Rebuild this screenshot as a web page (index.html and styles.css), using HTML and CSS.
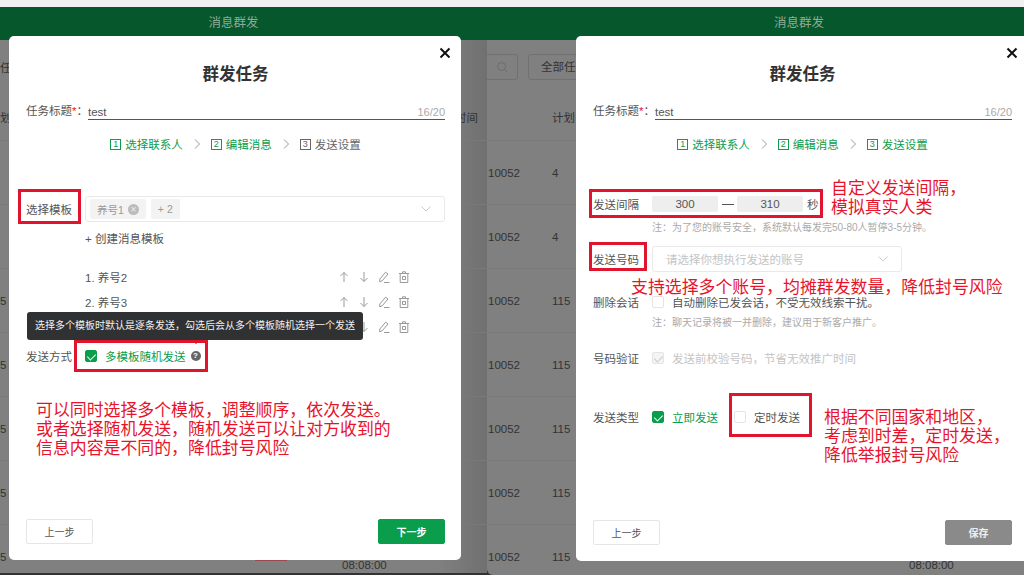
FILE: index.html
```html
<!DOCTYPE html>
<html lang="zh-CN">
<head>
    <meta charset="UTF-8">
    <meta name="viewport" content="width=device-width, initial-scale=1.0">
    <title>消息群发</title>
    <link rel="stylesheet" href="styles.css">
</head>
<body>
    <svg class="defs" aria-hidden="true">
        <symbol id="i-up" viewBox="0 0 12 12"><path d="M6 11V1.5M2.5 5 6 1.5 9.5 5"/></symbol>
        <symbol id="i-down" viewBox="0 0 12 12"><path d="M6 1v9.5M2.5 7 6 10.5 9.5 7"/></symbol>
        <symbol id="i-pen" viewBox="0 0 12 12"><path d="M1.8 8 7.6 1.2 10 3 4.2 9.8l-2.6.9zM6 11.5h5.5"/></symbol>
        <symbol id="i-bin" viewBox="0 0 12 12"><path d="M2.2 2.5h7.6v9H2.2zM1 2.5h10M4.5 2.5V.8h3v1.7M4.5 5.5h3v3h-3z"/></symbol>
        <symbol id="i-next" viewBox="0 0 8 12"><path d="M2 1.5 6.5 6 2 10.5"/></symbol>
        <symbol id="i-drop" viewBox="0 0 12 8"><path d="M1.5 1.5 6 6l4.5-4.5"/></symbol>
        <symbol id="i-close" viewBox="0 0 12 12"><path d="M1.5 1.5l9 9M10.5 1.5l-9 9"/></symbol>
    </svg>

    <!-- 左：选择模板 -->
    <section class="panel panel-left">
        <div class="topbar"></div>
        <header class="app-title">消息群发</header>
        <div class="toolbar"><span class="tool-text">任</span></div>
        <div class="thead"><span>划</span><span class="thead-end">时间</span></div>
        <div class="row"></div>
        <div class="row"></div>
        <div class="row"><span class="c-id">5</span></div>
        <div class="row"><span class="c-id">5</span></div>
        <div class="row"><span class="c-id">5</span></div>
        <div class="row"><span class="c-id">5</span></div>
        <div class="row"><span class="c-id">5</span><span class="c-status"></span><span class="c-time">08:08:00</span></div>

        <div class="modal">
            <button class="close" type="button"><svg><use href="#i-close"/></svg></button>
            <h2>群发任务</h2>
            <div class="title-row">
                <label>任务标题<em>*</em>：</label>
                <div class="title-input"><span>test</span><span class="count">16/20</span></div>
            </div>
            <div class="steps">
                <span class="step on"><i>1</i>选择联系人</span>
                <svg class="sep"><use href="#i-next"/></svg>
                <span class="step on"><i>2</i>编辑消息</span>
                <svg class="sep"><use href="#i-next"/></svg>
                <span class="step"><i>3</i>发送设置</span>
            </div>

            <div class="field field-first">
                <label>选择模板</label>
                <div class="select">
                    <span class="tag">养号1<b class="tag-x">×</b></span>
                    <span class="tag">+ 2</span>
                    <svg class="drop"><use href="#i-drop"/></svg>
                </div>
            </div>
            <a class="create" href="#">+ 创建消息模板</a>
            <ul class="tpl-list">
                <li><span>1. 养号2</span>
                    <div class="tpl-actions"><svg><use href="#i-up"/></svg><svg><use href="#i-down"/></svg><svg><use href="#i-pen"/></svg><svg><use href="#i-bin"/></svg></div>
                </li>
                <li><span>2. 养号3</span>
                    <div class="tpl-actions"><svg><use href="#i-up"/></svg><svg><use href="#i-down"/></svg><svg><use href="#i-pen"/></svg><svg><use href="#i-bin"/></svg></div>
                </li>
                <li><span></span>
                    <div class="tpl-actions"><svg><use href="#i-up"/></svg><svg><use href="#i-down"/></svg><svg><use href="#i-pen"/></svg><svg><use href="#i-bin"/></svg></div>
                </li>
            </ul>
            <div class="field field-method">
                <label>发送方式</label>
                <div class="check-line">
                    <span class="check on"></span><span class="green">多模板随机发送</span><span class="help">?</span>
                </div>
            </div>

            <div class="foot">
                <button class="btn" type="button">上一步</button>
                <button class="btn primary" type="button">下一步</button>
            </div>

            <div class="tip">选择多个模板时默认是逐条发送，勾选后会从多个模板随机选择一个发送</div>
            <div class="mark m-tpl"></div>
            <div class="mark m-method"></div>
            <p class="note n-left">可以同时选择多个模板，调整顺序，依次发送。<br>或者选择随机发送，随机发送可以让对方收到的<br>信息内容是不同的，降低封号风险</p>
        </div>
    </section>

    <!-- 右：发送设置 -->
    <section class="panel panel-right">
        <div class="topbar"></div>
        <header class="app-title">消息群发</header>
        <div class="toolbar">
            <span class="search"><svg viewBox="0 0 12 12"><circle cx="5.5" cy="5.5" r="4"/><path d="M8.5 8.5 11 11"/></svg></span>
            <span class="filter">全部任务</span>
        </div>
        <div class="thead"><span class="thead-plan">计划</span></div>
        <div class="row"><span class="c-id">10052</span><span class="c-num">4</span></div>
        <div class="row"><span class="c-id">10052</span><span class="c-num">4</span></div>
        <div class="row"><span class="c-id">10052</span><span class="c-num">115</span></div>
        <div class="row"><span class="c-id">10052</span><span class="c-num">115</span></div>
        <div class="row"><span class="c-id">10052</span><span class="c-num">115</span></div>
        <div class="row"><span class="c-id">10052</span><span class="c-num">115</span></div>
        <div class="row"><span class="c-id">10052</span><span class="c-num">115</span><span class="c-status"></span><span class="c-time">08:08:00</span></div>

        <div class="modal">
            <button class="close" type="button"><svg><use href="#i-close"/></svg></button>
            <h2>群发任务</h2>
            <div class="title-row">
                <label>任务标题<em>*</em>：</label>
                <div class="title-input"><span>test</span><span class="count">16/20</span></div>
            </div>
            <div class="steps">
                <span class="step on"><i>1</i>选择联系人</span>
                <svg class="sep"><use href="#i-next"/></svg>
                <span class="step on"><i>2</i>编辑消息</span>
                <svg class="sep"><use href="#i-next"/></svg>
                <span class="step on"><i>3</i>发送设置</span>
            </div>

            <div class="field field-first field-gap">
                <label>发送间隔</label>
                <div class="range">
                    <span class="num">300</span><span class="dash"></span><span class="num">310</span><span>秒</span>
                </div>
            </div>
            <div class="field hint"><span></span><span>注：为了您的账号安全，系统默认每发完50-80人暂停3-5分钟。</span></div>
            <div class="field field-account">
                <label>发送号码</label>
                <div class="select select-account">
                    <span class="placeholder">请选择你想执行发送的账号</span>
                    <svg class="drop"><use href="#i-drop"/></svg>
                </div>
            </div>
            <div class="field field-delete">
                <label>删除会话</label>
                <div class="check-line"><span class="check"></span><span>自动删除已发会话，不受无效线索干扰。</span></div>
            </div>
            <div class="field hint hint-delete"><span></span><span>注：聊天记录将被一并删除，建议用于新客户推广。</span></div>
            <div class="field field-verify">
                <label>号码验证</label>
                <div class="check-line muted"><span class="check off"></span><span>发送前校验号码，节省无效推广时间</span></div>
            </div>
            <div class="field field-type">
                <label>发送类型</label>
                <div class="check-line">
                    <span class="check on"></span><span class="green">立即发送</span>
                    <span class="check check-later"></span><span>定时发送</span>
                </div>
            </div>

            <div class="foot">
                <button class="btn" type="button">上一步</button>
                <button class="btn disabled" type="button">保存</button>
            </div>

            <div class="mark m-gap"></div>
            <div class="mark m-account"></div>
            <div class="mark m-later"></div>
            <p class="note n-gap">自定义发送间隔，<br>模拟真实人类</p>
            <p class="note n-account">支持选择多个账号，均摊群发数量，降低封号风险</p>
            <p class="note n-later">根据不同国家和地区，<br>考虑到时差，定时发送，<br>降低举报封号风险</p>
        </div>
    </section>
</body>
</html>
```

FILE: styles.css
```css
* {
    box-sizing: border-box;
}
html, body {
    height: 100%;
}
body {
    margin: 0;
    display: flex;
    overflow: hidden;
    background: #333;
    font-family: "Liberation Sans", "Noto Sans CJK SC", sans-serif;
    font-size: 11.5px;
    color: #555;
}
.defs {
    display: none;
}
svg {
    fill: none;
    stroke: currentColor;
    stroke-width: 1;
}

/* 背景页面 */
.panel {
    position: relative;
    overflow: hidden;
    background: #808080;
    color: #333;
    flex: none;
}
.panel-left {
    width: 487px;
    height: 573px;
    background: linear-gradient(90deg, #808080 90%, #707070);
}
.panel-right {
    width: 537px;
    height: 575px;
    border-bottom-left-radius: 6px;
}
.topbar {
    height: 7px;
    background: #f0f1f1;
}
.app-title {
    width: 467px;
    height: 33px;
    line-height: 32px;
    text-align: center;
    font-size: 12.5px;
    color: #8eaa98;
    box-shadow: 20px 0 0 #06582c;
    background: #06582c;
}
.panel-right .app-title {
    width: 624px;
}
.toolbar {
    display: flex;
    align-items: center;
    gap: 10px;
    height: 39px;
    padding-top: 14px;
}
.panel-right .toolbar {
    margin-left: -10px;
}
.search {
    width: 41px;
    height: 26px;
    display: flex;
    align-items: center;
    justify-content: flex-end;
    padding-right: 9px;
    border: 1px solid #717171;
    border-radius: 3px;
    color: #6c6c6c;
}
.search svg {
    width: 12px;
    height: 12px;
}
.filter {
    width: 100px;
    height: 26px;
    line-height: 24px;
    padding-left: 12px;
    border: 1px solid #717171;
    border-radius: 3px;
}
.thead {
    display: flex;
    justify-content: space-between;
    align-items: center;
    height: 61px;
    padding-top: 15px;
    padding-right: 9px;
    font-size: 11.5px;
}
.thead-end {
    margin-left: auto;
}
.thead-plan {
    margin-left: 65px;
}
.row {
    display: flex;
    align-items: center;
    height: 64px;
    border-top: 1px solid #797979;
    font-size: 11.5px;
}
.c-id {
    width: 255px;
    flex: none;
}
.panel-right .c-id {
    width: 64px;
    margin-left: 1px;
}
.c-num {
    width: 268px;
    flex: none;
}
.c-status {
    width: 32px;
    height: 9px;
    margin-right: 55px;
    flex: none;
    background: #9a4a52;
}
.panel-right .c-status {
    margin-right: 57px;
}
.c-time {
    padding-top: 16px;
}

/* 弹窗 */
.modal {
    position: absolute;
    left: 9px;
    top: 36px;
    width: 452px;
    height: 524px;
    display: flex;
    flex-direction: column;
    padding: 28px 16px 16px 17px;
    background: #fff;
    border-radius: 5px;
    color: #555;
}
.panel-right .modal {
    left: 89px;
    height: 525px;
}
.close {
    position: absolute;
    top: 11px;
    right: 10px;
    width: 12px;
    height: 12px;
    padding: 0;
    border: 0;
    background: none;
    color: #111;
}
.close svg {
    display: block;
    width: 12px;
    height: 12px;
    stroke-width: 2;
}
h2 {
    margin: 0;
    height: 20px;
    line-height: 20px;
    text-align: center;
    font-size: 16.5px;
    font-weight: 600;
    color: #333;
}
.title-row {
    display: flex;
    height: 16px;
    margin-top: 19px;
}
.title-row label {
    width: 62px;
    flex: none;
    line-height: 16px;
}
.title-row em {
    color: #e8132b;
    font-style: normal;
}
.title-input {
    flex: 1;
    display: flex;
    justify-content: space-between;
    height: 17px;
    line-height: 18px;
    border-bottom: 1px solid #555;
}
.count {
    color: #aaa;
    font-size: 11px;
}
.steps {
    display: flex;
    align-items: center;
    justify-content: center;
    height: 14px;
    margin-top: 18px;
    color: #666;
}
.step {
    display: flex;
    align-items: center;
    gap: 4px;
}
.step i {
    width: 11px;
    height: 11px;
    line-height: 9px;
    text-align: center;
    border: 1px solid currentColor;
    font-size: 9px;
    font-style: normal;
}
.step.on {
    color: #0a9d4b;
}
.sep {
    width: 8px;
    height: 12px;
    margin: 0 10px;
    color: #999;
}

.field {
    display: grid;
    grid-template-columns: 59px 1fr;
    align-items: center;
}
.field-first {
    margin-top: 45px;
}
.select {
    display: flex;
    align-items: center;
    gap: 5px;
    height: 26px;
    padding: 0 4px;
    border: 1px solid #e9e9e9;
    border-radius: 3px;
    font-size: 10.5px;
    color: #999;
}
.select .drop {
    width: 12px;
    height: 8px;
    margin-left: auto;
    margin-right: 8px;
    color: #ccc;
}
.tag {
    display: flex;
    align-items: center;
    gap: 4px;
    height: 20px;
    padding: 0 7px;
    background: #f3f3f3;
    border-radius: 2px;
}
.tag-x {
    width: 11px;
    height: 11px;
    line-height: 11px;
    text-align: center;
    border-radius: 50%;
    background: #bbb;
    color: #eee;
    font-size: 10px;
    font-weight: normal;
}
.create {
    display: block;
    height: 14px;
    line-height: 14px;
    margin: 10px 0 0 59px;
    color: #555;
    text-decoration: none;
}
.tpl-list {
    list-style: none;
    padding: 0;
    margin: 18px 0 0 59px;
}
.tpl-list li {
    display: flex;
    align-items: center;
    justify-content: space-between;
    height: 25px;
    padding-right: 35px;
}
.tpl-actions {
    display: flex;
    gap: 8px;
    color: #999;
}
.tpl-actions svg {
    width: 12px;
    height: 12px;
}
.field-method {
    height: 16px;
    margin-top: 9px;
}
.check-line {
    display: flex;
    align-items: center;
    gap: 8px;
}
.check {
    position: relative;
    width: 12px;
    height: 12px;
    flex: none;
    border: 1px solid #e4e4e4;
    border-radius: 2px;
    background: #fff;
}
.check.on {
    border-color: #0a9d4b;
    background: #0a9d4b;
}
.check.on::after, .check.off::after {
    content: "";
    position: absolute;
    left: 3px;
    top: 1px;
    width: 4px;
    height: 7px;
    border: solid #fff;
    border-width: 0 1px 1px 0;
    transform: rotate(45deg);
}
.check.off {
    background: #f4f4f4;
}
.check.off::after {
    border-color: #c8c8c8;
}
.green {
    color: #0a9d4b;
}
.help {
    width: 10px;
    height: 10px;
    margin-left: -3px;
    line-height: 10px;
    text-align: center;
    border-radius: 50%;
    background: #666;
    color: #fff;
    font-size: 8px;
    font-weight: bold;
}
.foot {
    display: flex;
    justify-content: space-between;
    margin-top: auto;
}
.btn {
    width: 67px;
    height: 25px;
    padding: 0;
    border: 1px solid #e6e6e6;
    border-radius: 2px;
    background: #fff;
    color: #555;
    font-family: inherit;
    font-size: 10px;
}
.btn.primary {
    border-color: #0a9d4b;
    background: #0a9d4b;
    color: #fff;
    font-weight: bold;
}
.btn.disabled {
    border-color: #8a8a8a;
    background: #8a8a8a;
    color: #eee;
    font-weight: bold;
}

/* 右侧表单 */
.range {
    display: flex;
    align-items: center;
}
.num {
    width: 66px;
    height: 16px;
    line-height: 16px;
    text-align: center;
    background: #eee;
    border-radius: 2px;
}
.dash {
    width: 12px;
    height: 1px;
    margin: 0 3px 0 4px;
    background: #555;
}
.num + .dash + .num {
    margin-right: 4px;
}
.hint {
    margin-top: 7px;
    height: 12px;
    font-size: 10px;
    color: #aaa;
}
.field-account {
    margin-top: 15px;
}
.select-account {
    width: 250px;
    padding-left: 13px;
    font-size: 11.5px;
    color: #c4c4c4;
}
.field-delete {
    height: 14px;
    margin-top: 22px;
}
.hint-delete {
    margin-top: 6px;
}
.field-verify {
    height: 14px;
    margin-top: 24px;
}
.muted {
    color: #c4c4c4;
}
.field-type {
    height: 14px;
    margin-top: 45px;
}
.check-later {
    margin-left: 8px;
}

/* 红色标注 */
.mark {
    position: absolute;
    border: 3px solid #e0142c;
}
.m-tpl {
    left: 9px;
    top: 153px;
    width: 63px;
    height: 35px;
}
.m-method {
    left: 65px;
    top: 304px;
    width: 134px;
    height: 32px;
}
.m-gap {
    left: 13px;
    top: 153px;
    width: 234px;
    height: 29px;
}
.m-account {
    left: 13px;
    top: 206px;
    width: 58px;
    height: 29px;
}
.m-later {
    left: 153px;
    top: 357px;
    width: 83px;
    height: 44px;
}
.note {
    position: absolute;
    margin: 0;
    font-size: 16.9px;
    line-height: 19px;
    color: #e8132b;
    white-space: nowrap;
}
.n-left {
    left: 27px;
    top: 365px;
}
.n-gap {
    left: 255px;
    top: 143px;
}
.n-account {
    left: 55px;
    top: 242px;
}
.n-later {
    left: 248px;
    top: 372px;
}
.tip {
    position: absolute;
    left: 18px;
    top: 276px;
    width: 336px;
    height: 28px;
    line-height: 28px;
    padding-left: 8px;
    background: #2f3133;
    border-radius: 3px;
    color: #f2f2f2;
    font-size: 10px;
    white-space: nowrap;
}
.tip::after {
    content: "";
    position: absolute;
    left: 165px;
    top: 28px;
    border: 4px solid transparent;
    border-top-color: #2f3133;
}
```
